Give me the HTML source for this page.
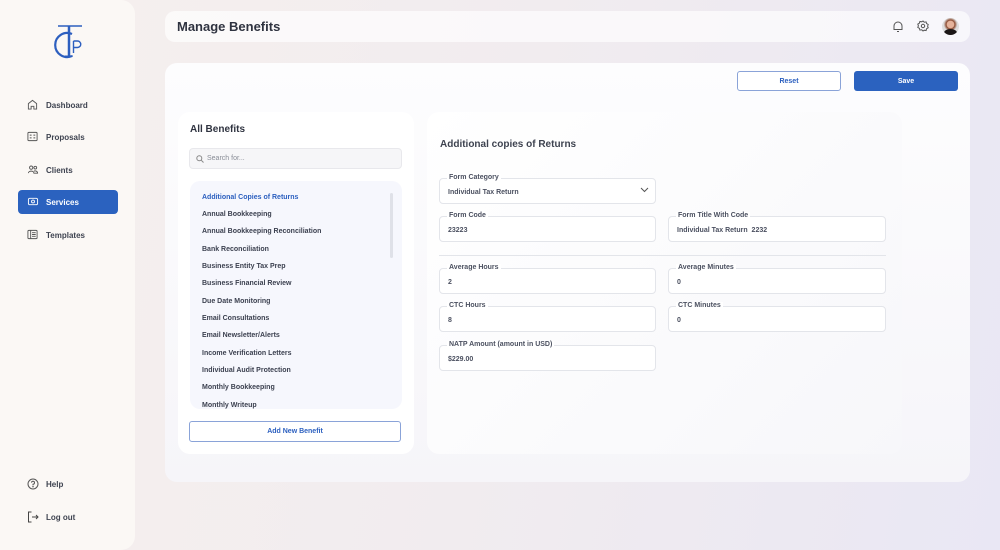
<!DOCTYPE html>
<html><head><meta charset="utf-8"><style>
*{box-sizing:border-box;margin:0;padding:0}
body{width:1000px;height:550px;overflow:hidden;font-family:"Liberation Sans",sans-serif;background:linear-gradient(100deg,#f6f0ee 0%,#f1ecef 50%,#e9e7f4 100%);position:relative;color:#363b48}
.abs{position:absolute}
.side{left:0;top:0;width:135px;height:550px;background:#fbf8f5;border-radius:0 14px 14px 0}
.nav{position:absolute;left:18px;width:100px;height:24px;border-radius:4px;font-size:8px;font-weight:bold;color:#3e4350;display:flex;align-items:center;padding-left:28px}
.nav svg{position:absolute;left:9px;top:6px}
.nav.act{background:#2b62bf;color:#fff}
.hdr{left:165px;top:11px;width:805px;height:31px;background:rgba(255,255,255,.65);border-radius:10px}
.main{left:165px;top:63px;width:805px;height:419px;background:linear-gradient(180deg,#fdfdfe,#f6f5f9);border-radius:12px}
.card{background:#fff;border-radius:12px}
.btn{position:absolute;height:20px;border-radius:3px;font-size:7px;font-weight:bold;display:flex;align-items:center;justify-content:center}
.li{position:absolute;left:202px;font-size:7px;font-weight:bold;color:#3c4150}
.fld{position:absolute;height:26px;border:1px solid #e3e5ea;border-radius:4px;background:#fff}
.fld .l{position:absolute;left:7px;top:-5px;background:#fff;padding:0 2px;font-size:7px;font-weight:bold;color:#4b5060}
.fld .v{position:absolute;left:8px;top:10px;font-size:7px;font-weight:bold;color:#4b5060}
</style></head><body>
<div class="abs side">
<svg class="abs" style="left:48px;top:24px" width="38" height="38" viewBox="0 0 38 38"><path d="M24 10 A12 12 0 1 0 24 32" fill="none" stroke="#2d5fbf" stroke-width="2.2"/><path d="M10 2h24" stroke="#2d5fbf" stroke-width="1.6"/><path d="M21 2v30" stroke="#2d5fbf" stroke-width="2.5"/><path d="M17 32h8" stroke="#2d5fbf" stroke-width="1"/><path d="M25.5 17v12M25.5 17h4a3.2 3.2 0 0 1 0 6.5h-4" stroke="#2d5fbf" stroke-width="1.4" fill="none"/></svg>
<div class="nav" style="top:93px"><svg width="11" height="11" viewBox="0 0 12 12" fill="none" stroke="#555" stroke-width="1"><path d="M1.5 11V5L6 1.5 10.5 5V11H7.5V8h-3v3z"/></svg>Dashboard</div>
<div class="nav" style="top:125px"><svg width="11" height="11" viewBox="0 0 12 12" fill="none" stroke="#555" stroke-width="1"><rect x="1" y="1.5" width="10" height="9" rx="1"/><path d="M3 4.5h2M7 4.5h2M3 7.5h2M7 7.5h2"/></svg>Proposals</div>
<div class="nav" style="top:158px"><svg width="12" height="11" viewBox="0 0 12 12" fill="none" stroke="#555" stroke-width="1"><circle cx="4" cy="4" r="1.8"/><circle cx="8.5" cy="4" r="1.5"/><path d="M1 10c0-3 6-3 6 0M6.5 10h4.5c0-2.5-3-3-4-2"/></svg>Clients</div>
<div class="nav act" style="top:190px"><svg width="12" height="11" viewBox="0 0 12 12" fill="none" stroke="#fff" stroke-width="1"><rect x="1" y="2.5" width="10" height="7" rx="1.5"/><circle cx="6" cy="6" r="1.6"/></svg>Services</div>
<div class="nav" style="top:223px"><svg width="11" height="11" viewBox="0 0 12 12" fill="none" stroke="#555" stroke-width="1"><rect x="1" y="1.5" width="10" height="9" rx="1"/><path d="M4 1.5v9M5.5 4h4M5.5 6h4M5.5 8h4"/></svg>Templates</div>
<div class="nav" style="top:472px"><svg width="12" height="12" viewBox="0 0 12 12" fill="none" stroke="#555" stroke-width="1"><circle cx="6" cy="6" r="5"/><path d="M4.5 4.6a1.5 1.5 0 1 1 1.5 1.6v1"/><circle cx="6" cy="8.6" r=".3"/></svg>Help</div>
<div class="nav" style="top:505px"><svg width="12" height="12" viewBox="0 0 12 12" fill="none" stroke="#444" stroke-width="1"><path d="M4.5 1H1.5v10h3M5 6h6M9 4l2 2-2 2"/></svg>Log out</div>
</div>
<div class="abs hdr"><div class="abs" style="left:12px;top:8px;font-size:13px;font-weight:bold;color:#2f3340">Manage Benefits</div>
<svg class="abs" style="left:727px;top:9px" width="12" height="13" viewBox="0 0 12 13" fill="none" stroke="#555" stroke-width="1"><path d="M2 9.5V6a4 4 0 0 1 8 0v3.5H2zM5 11.5h2"/></svg>
<svg class="abs" style="left:752px;top:9px" width="12" height="12" viewBox="0 0 12 12" fill="none" stroke="#555" stroke-width="1"><path d="M6 1l1.3 1.2 1.8-.3.5 1.7 1.6.9-.6 1.7.6 1.6-1.6.9-.5 1.8-1.8-.3L6 11l-1.3-1.2-1.8.3-.5-1.8-1.6-.9.6-1.6-.6-1.7 1.6-.9.5-1.7 1.8.3z"/><circle cx="6" cy="6" r="1.7"/></svg>
<div class="abs" style="left:777px;top:7px;width:17px;height:17px;border-radius:50%;background:radial-gradient(circle at 50% 38%,#e5b39b 0 25%,#8a4a30 32%,#ddd 50%);overflow:hidden"><div class="abs" style="left:2px;top:11px;width:13px;height:8px;border-radius:50%;background:#1b1616"></div></div>
</div>
<div class="abs main">
<div class="btn" style="left:572px;top:8px;width:104px;height:20px;border:1px solid #8aa3d8;color:#2b5fbf;background:#fff">Reset</div>
<div class="btn" style="left:689px;top:8px;width:104px;height:20px;background:#2b62bf;color:#fff">Save</div>
</div>
<div class="abs card" style="left:178px;top:112px;width:236px;height:342px"></div>
<div class="abs" style="left:190px;top:124px;font-size:10px;font-weight:bold;color:#2f3340">All Benefits</div>
<div class="abs" style="left:189px;top:148px;width:213px;height:21px;border:1px solid #e8e8ec;border-radius:4px;background:#f6f6f8;font-size:7px;color:#888c96;padding:6px 0 0 17px">Search for...<svg class="abs" style="left:6px;top:6px" width="8" height="8" viewBox="0 0 8 8" fill="none" stroke="#888" stroke-width="1"><circle cx="3.3" cy="3.3" r="2.5"/><path d="M5.2 5.2L7.5 7.5"/></svg></div>
<div class="abs" style="left:190px;top:181px;width:212px;height:228px;background:#f6f7fd;border-radius:10px"></div>
<div class="abs" style="left:390px;top:193px;width:3px;height:65px;background:#dfe1e8;border-radius:2px"></div>
<div class="li" style="top:194px;color:#2b5fbf">Additional Copies of Returns</div>
<div class="li" style="top:211px">Annual Bookkeeping</div>
<div class="li" style="top:228px">Annual Bookkeeping Reconciliation</div>
<div class="li" style="top:246px">Bank Reconciliation</div>
<div class="li" style="top:263px">Business Entity Tax Prep</div>
<div class="li" style="top:280px">Business Financial Review</div>
<div class="li" style="top:298px">Due Date Monitoring</div>
<div class="li" style="top:315px">Email Consultations</div>
<div class="li" style="top:332px">Email Newsletter/Alerts</div>
<div class="li" style="top:350px">Income Verification Letters</div>
<div class="li" style="top:367px">Individual Audit Protection</div>
<div class="li" style="top:384px">Monthly Bookkeeping</div>
<div class="li" style="top:402px">Monthly Writeup</div>
<div class="btn" style="left:189px;top:421px;width:212px;height:21px;border:1px solid #8aa3d8;color:#2b5fbf;background:#fff">Add New Benefit</div>
<div class="abs card" style="left:427px;top:112px;width:475px;height:342px;background:linear-gradient(135deg,#fff,#f7f7fa)"></div>
<div class="abs" style="left:440px;top:139px;font-size:10px;font-weight:bold;color:#3e4350">Additional copies of Returns</div>
<div class="fld" style="left:439px;top:178px;width:217px"><span class="l">Form Category</span><span class="v">Individual Tax Return</span><svg class="abs" style="left:200px;top:8px" width="9" height="6" viewBox="0 0 9 6" fill="none" stroke="#555" stroke-width="1"><path d="M1 1l3.5 3.5L8 1"/></svg></div>
<div class="fld" style="left:439px;top:216px;width:217px"><span class="l">Form Code</span><span class="v">23223</span></div>
<div class="fld" style="left:668px;top:216px;width:218px"><span class="l">Form Title With Code</span><span class="v">Individual Tax Return&nbsp; 2232</span></div>
<div class="abs" style="left:439px;top:255px;width:447px;height:1px;background:#e3e5ea"></div>
<div class="fld" style="left:439px;top:268px;width:217px"><span class="l">Average Hours</span><span class="v">2</span></div>
<div class="fld" style="left:668px;top:268px;width:218px"><span class="l">Average Minutes</span><span class="v">0</span></div>
<div class="fld" style="left:439px;top:306px;width:217px"><span class="l">CTC Hours</span><span class="v">8</span></div>
<div class="fld" style="left:668px;top:306px;width:218px"><span class="l">CTC Minutes</span><span class="v">0</span></div>
<div class="fld" style="left:439px;top:345px;width:217px"><span class="l">NATP Amount (amount in USD)</span><span class="v">$229.00</span></div>
</body></html>
